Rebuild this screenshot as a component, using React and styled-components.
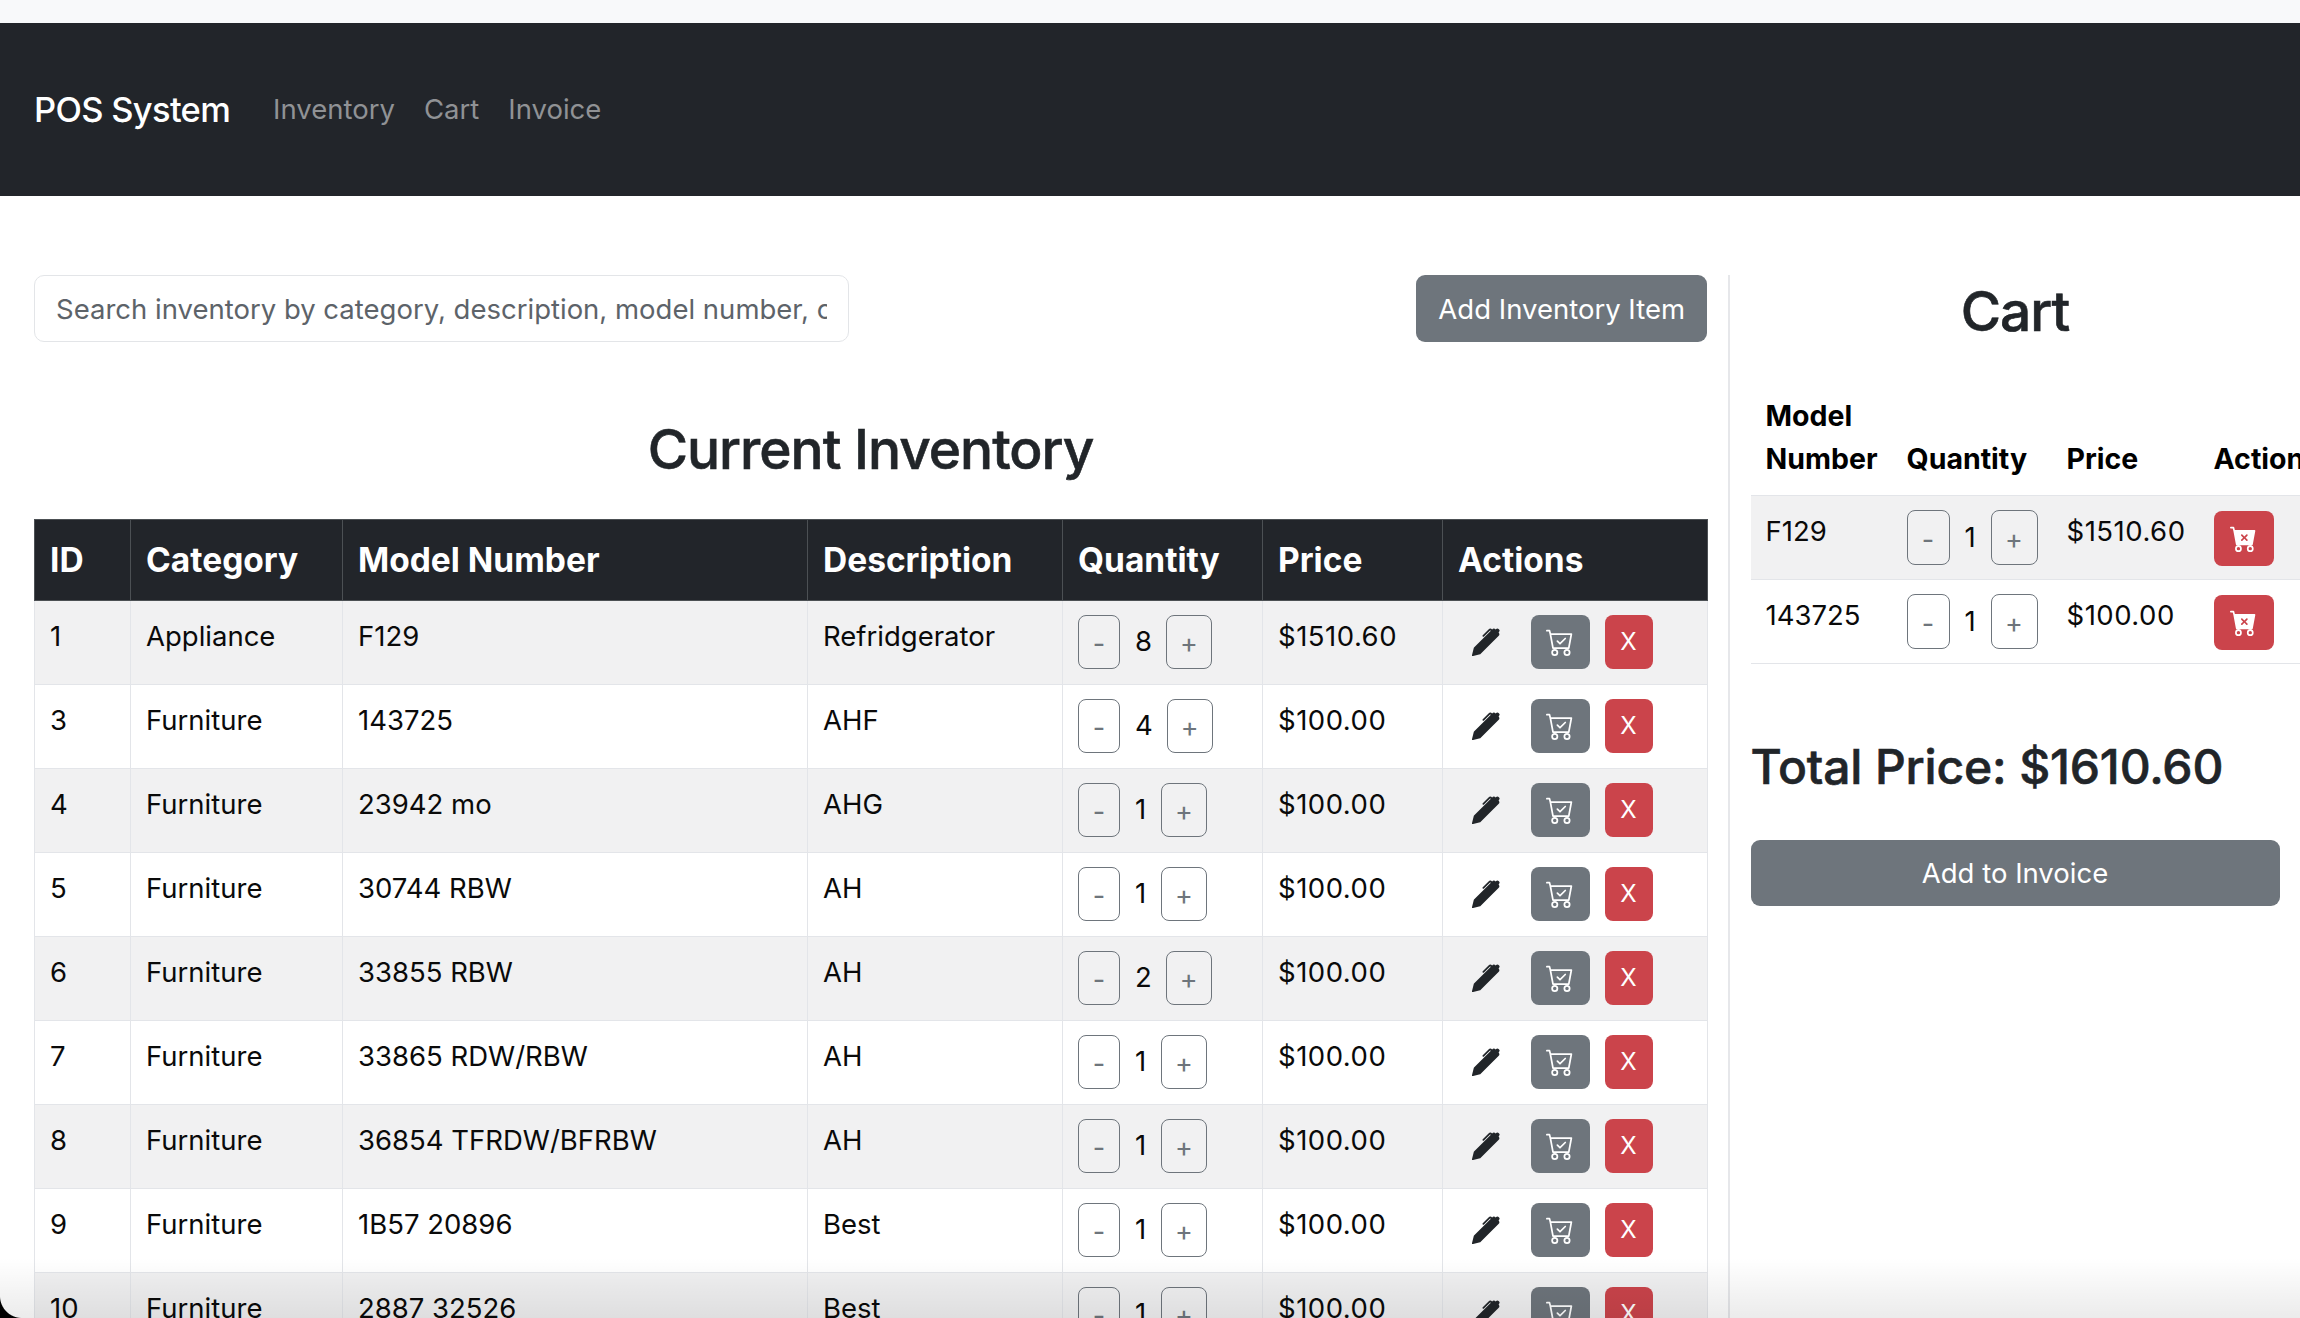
import React from 'react';
import styled, { createGlobalStyle } from 'styled-components';
import { BsPenFill, BsCartCheck, BsCartXFill } from 'react-icons/bs';

const GlobalStyle = createGlobalStyle`
  html, body {
    margin: 0;
    padding: 0;
    height: 100%;
    overflow: hidden;
    background: #fff;
  }

  body {
    font-family: Inter, "Noto Sans", sans-serif;
    font-size: 27.5px;
    line-height: 1.5;
    color: #212529;
  }
`;

const Page = styled.div`
  position: relative;
  width: 2300px;
  height: 1318px;
  overflow: hidden;
  padding-top: 23px;
  box-sizing: border-box;
  background-color: #f8f9fa;
`;

const Navbar = styled.nav`
  height: 173px;
  background: #22252a;
  display: flex;
  align-items: center;
  padding-left: 34px;
`;

const Brand = styled.a`
  font-size: 34.5px;
  font-weight: 500;
  color: #fff;
  margin-right: 43px;
  letter-spacing: -0.7px;
`;

const NavLink = styled.a`
  font-size: 27.5px;
  color: #909295;
  margin-right: 29px;
`;

const Main = styled.div`
  display: flex;
  align-items: stretch;
  height: 1122px;
  padding-top: 79px;
  box-sizing: border-box;
  background: #fff;
`;

const InventoryColumn = styled.section`
  flex: none;
  width: 1673px;
  margin-left: 34px;
  margin-right: 21px;
`;

const CartColumn = styled.aside`
  flex: none;
  width: 549px;
  border-left: 2px solid #e6e7ea;
  padding-left: 20.5px;
  box-sizing: border-box;
`;

const SearchRow = styled.div`
  display: flex;
  justify-content: space-between;
  align-items: center;
`;

const SearchInput = styled.input`
  width: 815px;
  height: 67px;
  box-sizing: border-box;
  border: 1.5px solid #e3e5e8;
  border-radius: 10px;
  padding: 0 21px;
  font: inherit;
  font-size: 27.5px;
  color: #212529;
  outline: none;

  &::placeholder {
    color: #5d6369;
    opacity: 1;
  }
`;

const SolidButton = styled.button`
  border: none;
  border-radius: 9px;
  background: #6e757c;
  color: #fff;
  font-family: inherit;
  font-size: 27.5px;
  height: 67px;
  padding: 0 22px;
`;

const WideButton = styled(SolidButton)`
  display: block;
  width: 529px;
  height: 66px;
  padding: 0;
`;

const Heading = styled.h2`
  margin: ${props => props.$margin};
  width: ${props => props.$width || 'auto'};
  font-size: 55px;
  font-weight: 500;
  line-height: 66px;
  letter-spacing: -1px;
  -webkit-text-stroke: 0.6px #212529;
  text-align: center;
  color: #212529;
`;

const Total = styled.h3`
  margin: 73.5px 0 44px;
  font-size: 48px;
  font-weight: 500;
  line-height: 58px;
  letter-spacing: -0.15px;
  -webkit-text-stroke: 0.6px #212529;
  color: #212529;
`;

const Table = styled.table`
  border-collapse: collapse;
  table-layout: fixed;
  width: ${props => props.$width}px;
  color: #0a0a0a;
`;

const HeadCell = styled.th`
  background: #22252a;
  color: #fff;
  font-size: 33.5px;
  font-weight: 700;
  text-align: left;
  height: 80.5px;
  padding: 0 15px;
  box-sizing: border-box;
  border: 1.5px solid #4c5054;
  white-space: nowrap;
`;

const Cell = styled.td`
  height: 84px;
  box-sizing: border-box;
  padding: 15px 15px 0;
  vertical-align: top;
  border: 1.5px solid #e3e5e9;
  background: ${props => (props.$striped ? '#f1f1f2' : '#fff')};
  white-space: nowrap;
`;

const CartHeadCell = styled.th`
  font-size: 28.5px;
  font-weight: 700;
  text-align: left;
  vertical-align: bottom;
  line-height: 43px;
  padding: 15px;
  color: #000;
  border-bottom: 1.5px solid #e3e5e9;
`;

const CartCell = styled(Cell)`
  border-width: 0 0 1.5px;
`;

const Price = styled.span`
  letter-spacing: 0.5px;
`;

const QtyWrap = styled.div`
  display: inline-flex;
  align-items: center;
  margin-top: -1px;
`;

const QtyButton = styled.button`
  height: ${props => (props.$cart ? 55 : 54)}px;
  width: ${props => props.$w}px;
  box-sizing: border-box;
  padding: 3px 0 0;
  border: 1.5px solid #6e757c;
  border-radius: 8px;
  background: transparent;
  color: #6e757c;
  font-family: inherit;
  font-size: 27px;
  line-height: 1;
`;

const QtyValue = styled.span`
  min-width: 12px;
  padding: 1px 14px 0 15px;
  line-height: 1;
`;

const Actions = styled.div`
  display: flex;
  align-items: flex-start;
  gap: 15px;
  margin: -1px 0 0 -1.5px;
`;

const IconButton = styled.button`
  width: ${props => props.$w || 59}px;
  height: ${props => props.$h || 54}px;
  padding: 0;
  border: none;
  border-radius: 8px;
  background: ${props => props.$bg};
  color: ${props => props.$fg || '#fff'};
  font-family: inherit;
  font-size: 24px;
  display: flex;
  align-items: center;
  justify-content: center;
`;

const BottomShade = styled.div`
  position: absolute;
  left: 0;
  right: 0;
  bottom: 0;
  height: 60px;
  pointer-events: none;
  background: linear-gradient(to bottom, rgba(0, 0, 0, 0), rgba(0, 0, 0, 0.08));
`;

const WindowCorner = styled.div`
  position: absolute;
  left: 0;
  bottom: 0;
  width: 22px;
  height: 22px;
  background: radial-gradient(circle at top right, transparent 21.5px, #000 22.5px);
`;

const inventory = [
  { id: 1, category: 'Appliance', model: 'F129', description: 'Refridgerator', qty: 8, price: '$1510.60' },
  { id: 3, category: 'Furniture', model: '143725', description: 'AHF', qty: 4, price: '$100.00' },
  { id: 4, category: 'Furniture', model: '23942 mo', description: 'AHG', qty: 1, price: '$100.00' },
  { id: 5, category: 'Furniture', model: '30744 RBW', description: 'AH', qty: 1, price: '$100.00' },
  { id: 6, category: 'Furniture', model: '33855 RBW', description: 'AH', qty: 2, price: '$100.00' },
  { id: 7, category: 'Furniture', model: '33865 RDW/RBW', description: 'AH', qty: 1, price: '$100.00' },
  { id: 8, category: 'Furniture', model: '36854 TFRDW/BFRBW', description: 'AH', qty: 1, price: '$100.00' },
  { id: 9, category: 'Furniture', model: '1B57 20896', description: 'Best', qty: 1, price: '$100.00' },
  { id: 10, category: 'Furniture', model: '2887 32526', description: 'Best', qty: 1, price: '$100.00' },
];

const cartItems = [
  { model: 'F129', qty: 1, price: '$1510.60' },
  { model: '143725', qty: 1, price: '$100.00' },
];

const columnWidths = [96, 212, 465, 255, 200, 180, 265];
const headers = ['ID', 'Category', 'Model Number', 'Description', 'Quantity', 'Price', 'Actions'];

const Qty = ({ value, cart }) => (
  <QtyWrap>
    <QtyButton $w={cart ? 43 : 42} $cart={cart}>-</QtyButton>
    <QtyValue>{value}</QtyValue>
    <QtyButton $w={cart ? 47 : 46} $cart={cart}>+</QtyButton>
  </QtyWrap>
);

const App = () => (
  <Page>
    <GlobalStyle />
    <Navbar>
      <Brand>POS System</Brand>
      <NavLink>Inventory</NavLink>
      <NavLink>Cart</NavLink>
      <NavLink>Invoice</NavLink>
    </Navbar>
    <Main>
      <InventoryColumn>
        <SearchRow>
          <SearchInput placeholder="Search inventory by category, description, model number, or price" />
          <SolidButton>Add Inventory Item</SolidButton>
        </SearchRow>
        <Heading $margin="74px 0 37px">Current Inventory</Heading>
        <Table $width={1673}>
          <colgroup>
            {columnWidths.map((w, i) => <col key={i} width={w} />)}
          </colgroup>
          <thead>
            <tr>
              {headers.map(h => <HeadCell key={h}>{h}</HeadCell>)}
            </tr>
          </thead>
          <tbody>
            {inventory.map((item, i) => {
              const striped = i % 2 === 0;
              return (
                <tr key={item.id}>
                  <Cell $striped={striped}>{item.id}</Cell>
                  <Cell $striped={striped}>{item.category}</Cell>
                  <Cell $striped={striped}>{item.model}</Cell>
                  <Cell $striped={striped}>{item.description}</Cell>
                  <Cell $striped={striped}><Qty value={item.qty} /></Cell>
                  <Cell $striped={striped}><Price>{item.price}</Price></Cell>
                  <Cell $striped={striped}>
                    <Actions>
                      <IconButton $bg="transparent" $fg="#212529"><BsPenFill size={28} /></IconButton>
                      <IconButton $bg="#6e757c"><BsCartCheck size={28} /></IconButton>
                      <IconButton $bg="#cb444b" $w={48}>X</IconButton>
                    </Actions>
                  </Cell>
                </tr>
              );
            })}
          </tbody>
        </Table>
      </InventoryColumn>
      <CartColumn>
        <Heading $margin="3px 0 35px" $width="529px">Cart</Heading>
        <Table $width={577}>
          <colgroup>
            <col width={141} />
            <col width={160} />
            <col width={147} />
            <col width={129} />
          </colgroup>
          <thead>
            <tr>
              <CartHeadCell>Model Number</CartHeadCell>
              <CartHeadCell>Quantity</CartHeadCell>
              <CartHeadCell>Price</CartHeadCell>
              <CartHeadCell>Actions</CartHeadCell>
            </tr>
          </thead>
          <tbody>
            {cartItems.map((item, i) => {
              const striped = i % 2 === 0;
              return (
                <tr key={item.model}>
                  <CartCell $striped={striped}>{item.model}</CartCell>
                  <CartCell $striped={striped}><Qty value={item.qty} cart /></CartCell>
                  <CartCell $striped={striped}><Price>{item.price}</Price></CartCell>
                  <CartCell $striped={striped}>
                    <IconButton $bg="#cb444b" $w={60} $h={55}><BsCartXFill size={27} /></IconButton>
                  </CartCell>
                </tr>
              );
            })}
          </tbody>
        </Table>
        <Total>Total Price: $1610.60</Total>
        <WideButton>Add to Invoice</WideButton>
      </CartColumn>
    </Main>
    <BottomShade />
    <WindowCorner />
  </Page>
);

export default App;
